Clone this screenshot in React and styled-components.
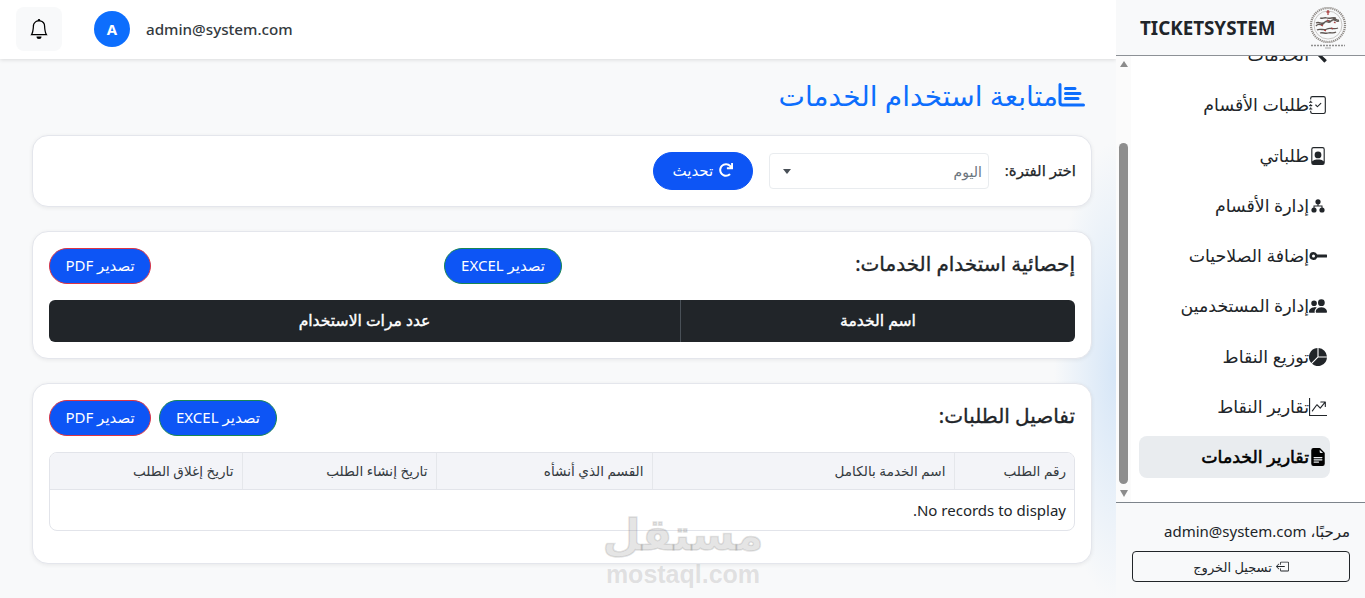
import React from 'react';
import styled, { createGlobalStyle } from 'styled-components';
import {
  BsBell, BsHammer, BsJournalCheck, BsFilePerson,
  BsPeopleFill, BsPieChartFill, BsGraphUpArrow,
  BsFileEarmarkTextFill, BsBoxArrowLeft,
} from 'react-icons/bs';
import { FaRedo } from 'react-icons/fa';

const Global = createGlobalStyle`
  html, body { margin: 0; padding: 0; height: 100%; overflow: hidden; }
  body { font-family: "Noto Sans", "DejaVu Sans", sans-serif; color: #212529; background: #f8f9fa; }
  * { box-sizing: border-box; }
`;

const Shell = styled.div`
  display: flex; width: 1365px; height: 598px; overflow: hidden;
`;
const Main = styled.div`
  position: relative; width: 1116px; height: 598px; display: flex; flex-direction: column;
  background: radial-gradient(ellipse 62px 230px at 100% 62%, #d6e6f7 0%, rgba(214,230,247,0) 100%), #f8f9fa;
`;
const Topbar = styled.header`
  height: 59px; flex: none; background: #fff; box-shadow: 0 1px 4px rgba(0,0,0,.12);
  display: flex; align-items: center; padding: 0 16px 1px; direction: ltr;
`;
const BellButton = styled.button`
  width: 46px; height: 44px; border: 0; border-radius: 8px; background: #f8f9fa; color: #000;
  display: flex; align-items: center; justify-content: center; padding: 0; margin-right: 32px;
`;
const Avatar = styled.span`
  width: 36px; height: 36px; border-radius: 50%; background: #0d6efd; color: #fff;
  font-weight: 700; font-size: 15px; display: flex; align-items: center; justify-content: center;
  margin-right: 16px;
`;
const UserMail = styled.span`font-size: 15.2px; font-weight: 500; color: #343a40;`;

const Content = styled.main`
  direction: rtl; padding: 0 24px 0 32px; display: flex; flex-direction: column; flex: 1;
`;
const PageTitle = styled.h1`
  margin: 0; height: 76px; display: flex; align-items: center; padding: 0 7px 4px 0;
  font-size: 28px; font-weight: 400; color: #0d6efd; line-height: 1;
`;
const Card = styled.section`
  background: #fff; border: 1px solid #e4e6ec; border-radius: 16px; padding: 16px;
  box-shadow: 0 1px 4px rgba(0,0,0,.07); margin-bottom: 24px;
`;
const FilterCard = styled(Card)`
  display: flex; align-items: center; gap: 16px; height: 72px; padding: 0 15px;
`;
const FilterLabel = styled.label`font-size: 15px; -webkit-text-stroke: .25px #212529; padding-bottom: 2px;`;
const SelectBox = styled.div`
  width: 220px; height: 36px; border: 1px solid #e9ecef; border-radius: 4px; background: #fff;
  display: flex; align-items: center; justify-content: space-between; padding: 0 6px 0 13px;
  font-size: 14px; color: #6c757d;
`;
const Caret = styled.span`
  width: 0; height: 0; border-left: 4.5px solid transparent; border-right: 4.5px solid transparent;
  border-top: 5px solid #495057;
`;
const Pill = styled.button`
  height: ${p => p.$h || 36}px; width: ${p => p.$w}px; border-radius: 19px; padding: 0 0 2px;
  background: #0d55f5; color: #fff; font: inherit; font-size: 15px;
  border: 1px solid ${p => p.$edge || '#0d55f5'};
  display: inline-flex; align-items: center; justify-content: center; gap: 6px;
`;
const CardHead = styled.div`
  display: flex; align-items: center; justify-content: space-between; height: 36px; margin-bottom: 16px;
`;
const CardTitle = styled.h2`
  margin: 0; padding-bottom: 5px; font-size: 20px; font-weight: 400; color: #212529; -webkit-text-stroke: .35px #212529;
`;
const ButtonGroup = styled.div`display: flex; gap: 8px;`;
const DarkTable = styled.table`
  width: 100%; height: 42px; border-collapse: separate; border-spacing: 0; table-layout: fixed;
  background: #212529; border-radius: 6px; overflow: hidden;
`;
const DarkCell = styled.th`
  width: ${p => p.$w}; color: #fff; font-size: 15.6px; font-weight: 400; text-align: center; padding: 0 0 2px;
  -webkit-text-stroke: .4px #fff;
  border-left: ${p => p.$divider ? '1px solid #495057' : '0'};
`;
const DetailsCard = styled(Card)`height: 181px;`;
const DataFrame = styled.div`
  border: 1px solid #e2e4ea; border-radius: 8px; overflow: hidden; height: 79px;
`;
const DataTable = styled.table`
  width: 100%; border-collapse: collapse; table-layout: fixed;
`;
const HeadCell = styled.th`
  width: ${p => p.$w}px; height: 36px; background: #f3f4f8; font-size: 13.6px; font-weight: 500; color: #343a40;
  text-align: right; padding: 0 8px; border-bottom: 1px solid #e2e4ea; border-left: 1px solid #e5e7eb;
  &:last-child { border-left: 0; }
`;
const EmptyCell = styled.td`
  height: 41px; font-size: 15px; color: #212529; text-align: right; padding: 0 8px;
`;
const Watermark = styled.div`
  position: absolute; left: 605px; top: 504px; width: 156px; pointer-events: none;
  display: flex; flex-direction: column; align-items: center;
  color: rgba(120,120,120,.2); direction: ltr;
`;
const WatermarkAr = styled.div`
  font-size: 44px; font-weight: 700; line-height: 58px; white-space: nowrap;
  -webkit-text-stroke: 1.5px rgba(120,120,120,.2);
`;
const WatermarkEn = styled.div`font-size: 25px; font-weight: 700; line-height: 24px; font-family: "Liberation Sans", sans-serif;`;

const Sidebar = styled.aside`
  position: relative; width: 249px; height: 598px; background: #fff; display: flex; flex-direction: column;
  direction: rtl;
`;
const Brand = styled.div`
  height: 56px; flex: none; background: #f8f9fa; border-bottom: 1px solid #8d9196; position: relative; z-index: 1;
  display: flex; align-items: center; justify-content: space-between; padding: 0 15px 0 24px;
`;
const BrandName = styled.span`font-size: 18.8px; font-weight: 700; color: #212529; direction: ltr;`;
const Menu = styled.nav`
  flex: 1; overflow: hidden; padding: 0 35px 0 23px;
`;
const MenuList = styled.ul`
  list-style: none; margin: -22px 0 0; padding: 0; display: flex; flex-direction: column; gap: 8.3px;
`;
const MenuItem = styled.li`
  height: 42px; border-radius: 8px; display: flex; align-items: center; padding: 0 3px 2px 4px;
  font-size: 17.4px;
  color: ${p => p.$active ? '#000' : '#212529'}; background: ${p => p.$active ? '#e9ecef' : 'transparent'};
  -webkit-text-stroke: ${p => p.$active ? '.55px #000' : '0'};
  white-space: nowrap;
`;
const IconSlot = styled.span`
  width: 18px; height: 18px; margin-top: 2px; flex: none; display: inline-flex; font-size: 18px; -webkit-text-stroke: 0;
`;
const Scrollbar = styled.div`
  position: absolute; left: 0; top: 56px; bottom: 96px; width: 15px; background: #fbfbfb;
  display: flex; flex-direction: column; align-items: center;
`;
const ArrowUp = styled.span`
  width: 0; height: 0; margin-top: 5px; border-left: 4.5px solid transparent; border-right: 4.5px solid transparent;
  border-bottom: 6px solid #8b8b8b;
`;
const ArrowDown = styled.span`
  width: 0; height: 0; margin-top: 6px; border-left: 4.5px solid transparent; border-right: 4.5px solid transparent;
  border-top: 7px solid #8b8b8b;
`;
const Thumb = styled.div`
  width: 9px; height: 341px; margin-top: 76px; background: #8e8e8e; border-radius: 5px;
`;
const SideFoot = styled.div`
  height: 96px; flex: none; background: #f8f9fa; border-top: 1px solid #7d848b; padding: 16px 15px 0 16px;
`;
const Welcome = styled.div`font-size: 15px; line-height: 24px; text-align: right; margin-bottom: 8px;`;
const LogoutButton = styled.button`
  width: 218px; height: 31px; border: 1px solid #212529; border-radius: 4px; background: transparent;
  font: inherit; font-size: 13px; color: #212529; display: flex; align-items: center; justify-content: center; gap: 4px;
  padding: 0;
`;

const Seal = () => (
  <svg width="44" height="42" viewBox="0 0 44 42" aria-hidden="true">
    <circle cx="22" cy="18" r="17" fill="none" stroke="#8f8a86" strokeWidth="2.2" strokeDasharray="1.2 .8" />
    <circle cx="22" cy="18" r="14" fill="none" stroke="#bdbab7" strokeWidth=".8" />
    <path d="M10 19c3-4 5 1 8-3s4 2 7-2 5 2 8 0M10 16c3-2 6 2 9-1s6 1 8-2 4 1 6 0M11 23c3-2 7 1 10-1s7 1 11-1M14 11c2 1 4-1 7 0s6-1 9 0M14 26c3-1 5 1 8 0s5 1 8-1"
      fill="none" stroke="#5f5753" strokeWidth="1.3" />
    <path d="M22 3v5M20.3 5h3.4" stroke="#a32a2a" strokeWidth="1.1" />
    <path d="M15 18l2 1M25 21l2 1M21 13l2 1M28 15l1.5 1M18 23l2 .8" stroke="#a83c3c" strokeWidth="1.3" />
    <path d="M5 38.500h34" stroke="#8f8f8f" strokeWidth="1.3" strokeDasharray="2 1" />
    <path d="M19 41h6" stroke="#a8a8a8" strokeWidth="1" />
  </svg>
);

const ChartIcon = () => (
  <svg width="27" height="24" viewBox="0 0 27 24" aria-hidden="true" fill="none" stroke="#0d6efd" strokeLinecap="round">
    <path d="M2 1.500V19.500a2.500 2.500 0 0 0 2.500 2.500H25.500" strokeWidth="3" />
    <path d="M7.500 5.500H17M7.500 10.500H22M7.500 15.500H20" strokeWidth="3" />
  </svg>
);

const DeptIcon = () => (
  <svg width="18" height="18" viewBox="0 0 18 18" aria-hidden="true" fill="#212529">
    <circle cx="9" cy="4.800" r="2.600" />
    <circle cx="5" cy="13" r="2.600" />
    <circle cx="13" cy="13" r="2.600" />
    <path d="M8.500 6h1v2.500H13.500V11h-1V9.500h-7V11h-1V8.500h4z" />
  </svg>
);

const KeyIcon = () => (
  <svg width="18" height="18" viewBox="0 0 18 18" aria-hidden="true" fill="#212529">
    <path fillRule="evenodd" d="M4.500 5a4 4 0 0 1 3.700 2.500H17.500a.5.5 0 0 1 .5.500v2a.5.5 0 0 1-.5.500H8.200A4 4 0 1 1 4.500 5zM4.500 7.500a1.500 1.500 0 1 0 0 3 1.500 1.500 0 0 0 0-3z" />
  </svg>
);

const menu = [
  ['الخدمات', BsHammer],
  ['طلبات الأقسام', BsJournalCheck],
  ['طلباتي', BsFilePerson],
  ['إدارة الأقسام', DeptIcon],
  ['إضافة الصلاحيات', KeyIcon],
  ['إدارة المستخدمين', BsPeopleFill],
  ['توزيع النقاط', BsPieChartFill],
  ['تقارير النقاط', BsGraphUpArrow],
  ['تقارير الخدمات', BsFileEarmarkTextFill, true],
];
const columns = [
  ['رقم الطلب', 120], ['اسم الخدمة بالكامل', 302], ['القسم الذي أنشأه', 216],
  ['تاريخ إنشاء الطلب', 194], ['تاريخ إغلاق الطلب', 192],
];

export default function App() {
  return (
    <Shell>
      <Global />
      <Main>
        <Topbar>
          <BellButton aria-label="notifications"><BsBell size={20} /></BellButton>
          <Avatar>A</Avatar>
          <UserMail>admin@system.com</UserMail>
        </Topbar>
        <Content>
          <PageTitle><ChartIcon />متابعة استخدام الخدمات</PageTitle>
          <FilterCard>
            <FilterLabel>اختر الفترة:</FilterLabel>
            <SelectBox><span>اليوم</span><Caret /></SelectBox>
            <Pill $w={100} $h={38}><FaRedo size={14} />تحديث</Pill>
          </FilterCard>
          <Card>
            <CardHead>
              <CardTitle>إحصائية استخدام الخدمات:</CardTitle>
              <Pill $w={118} $edge="#198754">تصدير EXCEL</Pill>
              <Pill $w={102} $edge="#dc3545">تصدير PDF</Pill>
            </CardHead>
            <DarkTable>
              <thead>
                <tr>
                  <DarkCell $w="395px" $divider>اسم الخدمة</DarkCell>
                  <DarkCell>عدد مرات الاستخدام</DarkCell>
                </tr>
              </thead>
            </DarkTable>
          </Card>
          <DetailsCard>
            <CardHead>
              <CardTitle>تفاصيل الطلبات:</CardTitle>
              <ButtonGroup>
                <Pill $w={118} $edge="#198754">تصدير EXCEL</Pill>
                <Pill $w={102} $edge="#dc3545">تصدير PDF</Pill>
              </ButtonGroup>
            </CardHead>
            <DataFrame>
              <DataTable>
                <thead>
                  <tr>{columns.map(([t, w]) => <HeadCell key={t} $w={w}>{t}</HeadCell>)}</tr>
                </thead>
                <tbody>
                  <tr><EmptyCell colSpan={5}>No records to display.</EmptyCell></tr>
                </tbody>
              </DataTable>
            </DataFrame>
          </DetailsCard>
        </Content>
        <Watermark>
          <WatermarkAr>مستقل</WatermarkAr>
          <WatermarkEn>mostaql.com</WatermarkEn>
        </Watermark>
      </Main>
      <Sidebar>
        <Brand>
          <Seal />
          <BrandName>TICKETSYSTEM</BrandName>
        </Brand>
        <Menu>
          <MenuList>
            {menu.map(([label, Icon, active]) => (
              <MenuItem key={label} $active={active}>
                <IconSlot><Icon /></IconSlot>{label}
              </MenuItem>
            ))}
          </MenuList>
        </Menu>
        <Scrollbar>
          <ArrowUp />
          <Thumb />
          <ArrowDown />
        </Scrollbar>
        <SideFoot>
          <Welcome>مرحبًا، admin@system.com</Welcome>
          <LogoutButton><BsBoxArrowLeft size={13} />تسجيل الخروج</LogoutButton>
        </SideFoot>
      </Sidebar>
    </Shell>
  );
}
